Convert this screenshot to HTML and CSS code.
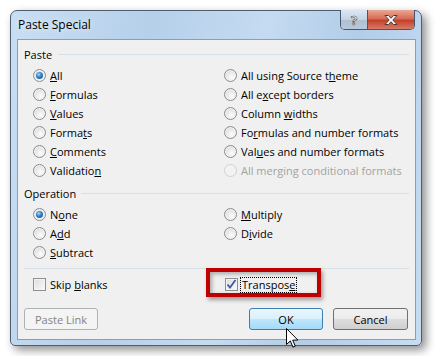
FILE: index.html
```html
<!DOCTYPE html>
<html lang="en">
<head>
  <meta charset="UTF-8">
  <title>Paste Special</title>
  <link rel="stylesheet" href="styles.css">
</head>
<body>
  <div class="window">
    <div class="titlebar">
      <span class="title">Paste Special</span>
      <div class="caption-btns">
        <span class="cap help">?</span>
        <span class="cap close">
          <svg width="16" height="12" viewBox="0 0 16 12"><path d="M2 1.5h3.5L8 4.3 10.5 1.5H14L9.8 6 14 10.5h-3.5L8 7.7 5.5 10.5H2L6.2 6z" fill="#fff" stroke="#4a3a36" stroke-width="1"/></svg>
        </span>
      </div>
    </div>

    <div class="panel">
      <div class="group-label">Paste</div>
      <div class="options">
        <label class="opt"><span class="radio on"></span><span><u>A</u>ll</span></label>
        <label class="opt"><span class="radio"></span><span>All using Source t<u>h</u>eme</span></label>
        <label class="opt"><span class="radio"></span><span><u>F</u>ormulas</span></label>
        <label class="opt"><span class="radio"></span><span>All e<u>x</u>cept borders</span></label>
        <label class="opt"><span class="radio"></span><span><u>V</u>alues</span></label>
        <label class="opt"><span class="radio"></span><span>Column <u>w</u>idths</span></label>
        <label class="opt"><span class="radio"></span><span>Forma<u>t</u>s</span></label>
        <label class="opt"><span class="radio"></span><span>Fo<u>r</u>mulas and number formats</span></label>
        <label class="opt"><span class="radio"></span><span><u>C</u>omments</span></label>
        <label class="opt"><span class="radio"></span><span>Val<u>u</u>es and number formats</span></label>
        <label class="opt"><span class="radio"></span><span>Validatio<u>n</u></span></label>
        <label class="opt disabled"><span class="radio"></span><span>All merging conditional formats</span></label>
      </div>

      <div class="group-label op">Operation</div>
      <div class="options">
        <label class="opt"><span class="radio on"></span><span>N<u>o</u>ne</span></label>
        <label class="opt"><span class="radio"></span><span><u>M</u>ultiply</span></label>
        <label class="opt"><span class="radio"></span><span>A<u>d</u>d</span></label>
        <label class="opt"><span class="radio"></span><span>D<u>i</u>vide</span></label>
        <label class="opt"><span class="radio"></span><span><u>S</u>ubtract</span></label>
      </div>

      <div class="sep"></div>

      <div class="options checks">
        <label class="opt"><span class="check"></span><span>Skip <u>b</u>lanks</span></label>
        <label class="opt marked">
          <span class="check on">
            <svg width="11" height="11" viewBox="0 0 11 11"><path d="M1.5 5.5l2.5 3 5.5-7.5" fill="none" stroke="#3d5ba0" stroke-width="1.8"/></svg>
          </span>
          <span class="focus">Transpos<u>e</u></span>
          <span class="highlight"></span>
        </label>
      </div>

      <div class="buttons">
        <button class="btn" disabled>Paste Link</button>
        <button class="btn default">OK
          <svg class="cursor" width="13" height="21" viewBox="0 0 13 21"><path d="M0.5 0.5v16l3.8-3.6 2.6 6.2 2.4-1-2.6-6h5.2z" fill="#fff" stroke="#000" stroke-width="1"/></svg>
        </button>
        <button class="btn cancel">Cancel</button>
      </div>
    </div>
  </div>
</body>
</html>
```

FILE: styles.css
```css
body { margin:0; background:#fff; font-family:"Open Sans", sans-serif; font-size:11px; color:#000; }

.window { margin:10px; width:410px; height:334px; border:1px solid #4f5d70; border-radius:7px 7px 5px 5px; display:flex; flex-direction:column;
  background:linear-gradient(100deg, #c8def3 0%, #b6d0ea 30%, #c4dbf1 55%, #b3cde8 75%, #c6dcf2 100%);
  box-shadow:4px 4px 10px rgba(0,0,0,.45); }

.titlebar { height:28px; display:flex; align-items:flex-start; }
.title { padding-left:7px; line-height:28px; font-size:12px; color:#000; text-shadow:0 0 6px rgba(255,255,255,.9); }
.caption-btns { margin-left:auto; margin-right:6px; margin-top:-1px; display:flex; height:19px; border:1px solid #4b5568; border-top:none; border-radius:0 0 5px 5px; overflow:hidden; }
.cap { display:flex; align-items:center; justify-content:center; height:19px; }
.help { width:26px; border-right:1px solid #4b5568; background:linear-gradient(#dce7f3, #c4d4e6 50%, #aebfd3 51%, #b9c9dc);
  color:#fff; font-weight:bold; font-size:13px; -webkit-text-stroke:0.6px #3c4450; }
.close { width:46px; background:linear-gradient(#e9a897, #d86b55 45%, #c5402a 55%, #d77b66); }

.panel { flex:1; margin:0 5px 5px 6px; border:1px solid #8a9fb6; background:#f0f0f0; padding:7px 6px 0; }

.group-label { display:flex; align-items:center; gap:6px; line-height:15px; }
.group-label::after { content:""; flex:1; height:1px; background:#d5dfe5; }
.group-label.op { margin-top:6px; gap:5px; }

.options { display:grid; grid-template-columns:191px 1fr; padding-left:9px; margin-top:4px; }
.opt { display:flex; align-items:center; gap:4px; height:19px; position:relative; }
.opt u { text-decoration-thickness:1px; text-underline-offset:1px; }
.opt.disabled { color:#a3a3a3; }

.radio { width:13px; height:13px; box-sizing:border-box; border-radius:50%; border:1px solid #8c8c8c; display:flex; align-items:center; justify-content:center;
  background:radial-gradient(circle at 60% 65%, #fdfdfd, #dcdcdc 75%); box-shadow:inset 0 0 0 1px #f4f4f4; }
.radio.on::after { content:""; width:7px; height:7px; border-radius:50%;
  background:radial-gradient(circle at 40% 35%, #a6d8fb, #2c7fc6 45%, #18508a 100%); }
.disabled .radio { border-color:#d0d0d0; background:#f2f2f2; }

.sep { height:1px; background:#d5dfe5; margin-top:6px; }
.checks { margin-top:6px; }
.check { width:13px; height:13px; box-sizing:border-box; border:1px solid #8e8f8f; display:flex; align-items:center; justify-content:center;
  background:linear-gradient(135deg, #dcdcdc, #fbfbfb); box-shadow:inset 0 0 0 1px #f4f4f4; }
.marked .check { margin-left:1px; }
.marked { gap:3px; }
.focus { outline:1px dotted #000; outline-offset:0; padding:0 1px; line-height:14px; }
.highlight { position:absolute; left:-18px; top:-7px; width:115px; height:29px; box-sizing:border-box; border:4px solid #c00000;
  box-shadow:2px 3px 4px rgba(0,0,0,.35), inset 2px 2px 4px rgba(0,0,0,.3); }

.buttons { display:flex; margin-top:14px; }
.btn { height:22px; width:74px; font-family:inherit; font-size:11px; border-radius:3px; border:1px solid #707070; color:#000; padding:0; position:relative;
  background:linear-gradient(#f2f2f2, #ebebeb 50%, #dddddd 51%, #cfcfcf); }
.btn:disabled { border-color:#adb2b5; background:#f4f4f4; color:#838383; }
.default { margin-left:auto; border-color:#3c7fb1; background:linear-gradient(#eaf6fd, #d9f0fc 50%, #bee6fd 51%, #a7d9f5); }
.cancel { width:75px; margin-left:10px; margin-right:1px; }
.cursor { position:absolute; left:36px; top:19px; }
```
